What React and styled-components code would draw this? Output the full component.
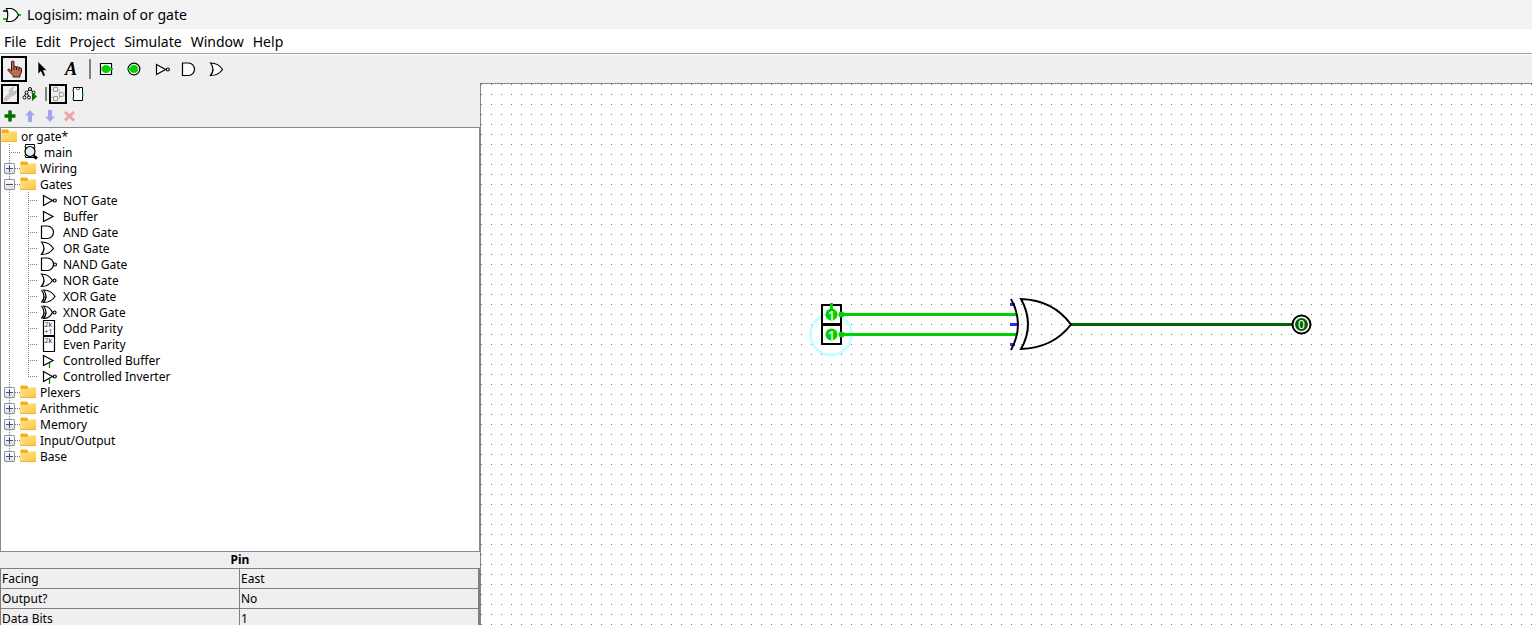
import React from "react";
import styled, { createGlobalStyle, css } from "styled-components";

const line = "#828790";
const face = "#efefef";
const lit = "#00d200";
const dim = "#006400";

const Global = createGlobalStyle`
  *, *::before, *::after { box-sizing: border-box; }
  body {
    margin: 0;
    background: ${face};
    color: #000;
    font-family: "Noto Sans", sans-serif;
    font-size: 12px;
    line-height: 16px;
  }
  button { font: inherit; color: inherit; background: none; border: 0; padding: 0; }
  svg { display: block; flex: none; }
`;

const Window = styled.div`
  display: flex;
  flex-direction: column;
  height: 100vh;
  overflow: hidden;
`;

const TitleBar = styled.header`
  display: flex;
  align-items: center;
  gap: 6px;
  flex: none;
  height: 29px;
  padding-left: 3px;
  background: #f3f3f3;
`;

const Title = styled.h1`
  margin: 0;
  font-size: 14px;
  font-weight: 400;
  line-height: 20px;
`;

const MenuBar = styled.nav`
  display: flex;
  align-items: center;
  gap: 9px;
  flex: none;
  height: 26px;
  padding-left: 4px;
  background: #fff;
  border-bottom: 1px solid #fff;
  box-shadow: inset 0 -1px #a0a0a0;
`;

const MenuItem = styled.button`
  font-size: 14px;
  line-height: 20px;
`;

const ToolBar = styled.div`
  display: flex;
  align-items: center;
  flex: none;
  height: ${(p) => (p.$small ? 22 : 28)}px;
`;

const ToolButton = styled.button`
  display: flex;
  align-items: center;
  justify-content: center;
  flex: none;
  width: ${(p) => (p.$small ? 20 : 28)}px;
  height: ${(p) => (p.$small ? 22 : 28)}px;
`;

const Chosen = styled.span`
  display: flex;
  align-items: center;
  justify-content: center;
  width: ${(p) => (p.$small ? 18 : 26)}px;
  height: ${(p) => (p.$small ? 20 : 26)}px;
  border: 2px solid #000;
`;

const TextGlyph = styled.span`
  padding-left: 2px;
  font: italic 700 18px/20px "Liberation Serif", serif;
`;

const Divider = styled.span`
  flex: none;
  width: 2px;
  height: ${(p) => (p.$small ? 14 : 20)}px;
  margin: 0 1px 0 5px;
  background: #808080;
`;

const Workspace = styled.div`
  display: flex;
  flex: 1;
  min-height: 0;
`;

const Explorer = styled.aside`
  display: flex;
  flex-direction: column;
  flex: none;
  width: 480px;
`;

const TreePanel = styled.div`
  flex: 1;
  min-height: 0;
  overflow: hidden;
  background: #fff;
  border: 1px solid ${line};
`;

const Branches = styled.ul`
  list-style: none;
  margin: 0;
  padding: 0;
`;

const Row = styled.div`
  display: flex;
  align-items: center;
  gap: 4px;
  height: 16px;
  white-space: nowrap;
`;

const Label = styled.span`
  padding-top: 2px;
`;

const Rails = styled.span`
  display: flex;
  height: 16px;
  margin-right: -4px;
`;

const dotsDown = "repeating-linear-gradient(to bottom, #808080 0 1px, transparent 1px 2px)";
const dotsAcross = "repeating-linear-gradient(to right, #808080 0 1px, transparent 1px 2px)";

const Rail = styled.span`
  display: flex;
  align-items: center;
  width: ${(p) => (p.$deep ? 20 : 19)}px;
  height: 16px;
  padding: 1px 0 0 3px;
  background-repeat: no-repeat;
  ${(p) =>
    p.$through
      ? css`
          background-image: ${dotsDown};
          background-position: 8px 0;
          background-size: 1px 16px;
        `
      : css`
          background-image: ${dotsDown}, ${dotsAcross};
          background-position: 8px 0, 8px 8px;
          background-size: 1px ${p.$last ? 9 : 16}px, ${p.$deep ? 10 : 11}px 1px;
        `}
`;

const Expander = styled.button`
  position: relative;
  width: 11px;
  height: 11px;
  border: 1px solid #919191;
  border-radius: 1px;
  background: linear-gradient(#fff, #e0e0e0);
  &::before, &::after {
    content: "";
    position: absolute;
    left: 1px;
    top: 4px;
    width: 7px;
    height: 1px;
    background: #3050a0;
  }
  &::after { display: ${(p) => (p.$open ? "none" : "block")}; transform: rotate(90deg); }
`;

const PropertiesBox = styled.div`
  flex: none;
  height: 73px;
  overflow: hidden;
`;

const Properties = styled.table`
  width: 100%;
  border-collapse: separate;
  border-spacing: 0;
  table-layout: fixed;
  border-right: 2px solid #808080;

  caption {
    height: 16px;
    font-weight: 700;
    text-align: center;
  }
  th, td {
    height: 20px;
    padding: 0 1px;
    font-weight: 400;
    text-align: left;
    border: 0 solid #808080;
    border-top-width: 1px;
    border-left-width: 1px;
  }
`;

const Canvas = styled.main`
  position: relative;
  flex: 1;
  min-width: 0;
  overflow: hidden;
  border: 0 solid ${line};
  border-top-width: 1px;
  border-left-width: 1px;
  background: #fff conic-gradient(from 270deg at 1px 1px, #777 90deg, transparent 0) 0 0 / 10px 10px;
`;

const Circuit = styled.svg`
  position: absolute;
  left: 320px;
  top: 206px;
`;

const Stroke = ({ w = 19, h = 16, children }) => (
  <svg width={w} height={h} viewBox={`0 0 ${w} ${h}`} fill="none" stroke="#000" strokeWidth="1.2" aria-hidden="true">
    {children}
  </svg>
);

const AND = "M1.5 2H7.5A6 6.250 0 0 1 7.5 14.5H1.5Z";
const OR = "M1.5 2Q9.5 2 13.5 8.5Q9.5 14.5 1.5 14.5Q6.5 8.5 1.5 2Z";
const NOR = "M1.5 2Q8.5 2 12.5 8.5Q8.5 14.5 1.5 14.5Q6.5 8.5 1.5 2Z";
const XOR = "M3.5 2Q11 2 15 8.5Q11 14.5 3.5 14.5Q8.5 8.5 3.5 2ZM1.5 2Q6.5 8.5 1.5 14.5";
const XNOR = "M3.5 2Q9.5 2 12.5 8.5Q9.5 14.5 3.5 14.5Q8.5 8.5 3.5 2ZM1.5 2Q6.5 8.5 1.5 14.5";

const Bubble = ({ x = 14.5 }) => <circle cx={x} cy="8.5" r="1.5" />;

const Small = ({ y, children }) => (
  <text x="4.5" y={y} fontSize="7" fill="#333" stroke="none">{children}</text>
);

const glyphs = {
  not: <><path d="M3.5 3.5L12.5 8.5L3.5 13.5Z" /><Bubble x={14.8} /></>,
  buffer: <path d="M3.5 3.5L13 8.5L3.5 13.5Z" />,
  and: <path d={AND} />,
  or: <path d={OR} />,
  nand: <><path d={AND} /><Bubble x={15} /></>,
  nor: <><path d={NOR} /><Bubble /></>,
  xor: <path d={XOR} />,
  xnor: <><path d={XNOR} /><Bubble /></>,
  odd: <><path d="M3.5 0.5H14.5V15.5H3.5Z" /><Small y="7">2k</Small><Small y="14">+1</Small></>,
  even: <><path d="M3.5 0.5H14.5V15.5H3.5Z" /><Small y="7">2k</Small></>,
  cbuffer: <><path d="M9.5 11V16" stroke="#008000" /><path d="M3.5 3.5L13 8.5L3.5 13.5Z" /></>,
  cinverter: <><path d="M9.5 11V16" stroke="#008000" /><path d="M3.5 3.5L12.5 8.5L3.5 13.5Z" /><Bubble x={14.8} /></>,
};

const Folder = () => (
  <svg width="16" height="16" viewBox="0 0 16 16" aria-hidden="true">
    <defs>
      <linearGradient id="folder" x1="0" y1="0" x2="1" y2="1">
        <stop offset="0" stopColor="#ffe296" />
        <stop offset="1" stopColor="#ffc83a" />
      </linearGradient>
    </defs>
    <path d="M0.5 2.5Q0.5 1.5 1.5 1.5H7L8.5 4H15.5V6H0.5Z" fill="#f5ad10" />
    <path d="M0 5H7L8.5 3.5H16V13.5Q16 14 15 14H1Q0 14 0 13Z" fill="url(#folder)" />
    <path d="M0.5 13.5H15.5" stroke="#eeb32c" />
  </svg>
);

const MainCircuit = () => (
  <svg width="20" height="16" viewBox="0 0 20 16" aria-hidden="true">
    <path d="M5.5 0.5H14.5V13.5H5.5Z" fill="#fff" stroke="#000" />
    <path d="M4 2.5H6M4 11.5H6M14 3.5H16" stroke={lit} />
    <path d="M13.5 12L17 14.5" stroke="#000" strokeWidth="3" />
    <circle cx="10" cy="7.5" r="5" fill="#e8eefc" stroke="#000" strokeWidth="1.2" />
  </svg>
);

const AppIcon = () => (
  <svg width="18" height="16" viewBox="0 0 18 16" aria-hidden="true">
    <path d="M0 4H5" stroke={dim} strokeWidth="2" />
    <path d="M0 12H5M15 8H18" stroke={lit} strokeWidth="2" />
    <path d="M3.5 1.5H8Q13 2.5 15.5 8Q13 13.5 8 14.5H3.5Q6 8 3.5 1.5Z" fill="#fff" stroke="#000" strokeWidth="1.2" />
  </svg>
);

const Hand = () => (
  <svg width="20" height="20" viewBox="0 0 20 20" aria-hidden="true">
    <path
      d="M7.5 12V3Q7.5 2 8.8 2Q10 2 10 3V8Q11 7 12.5 7.8Q14 7.3 15 8.5Q16.5 8 17.5 9.5V13L16 16V18H9V16.5L4 11.5Q3.5 9.5 5.5 10.2Z"
      fill="#bd6c54"
      stroke="#3b1a10"
    />
    <path d="M10 8V11M12.5 8V11M15 9V11.5" stroke="#3b1a10" fill="none" />
  </svg>
);

const Cursor = () => (
  <svg width="12" height="18" viewBox="0 0 12 18" aria-hidden="true">
    <path d="M2 1.5V14L5 11.5L7 16.5L9.5 15.5L7.4 10.5H11Z" fill="#000" stroke="#fff" strokeWidth="0.6" />
  </svg>
);

const PinIn = () => (
  <Stroke w={16} h={16}>
    <path d="M2.5 2.5H13.5V13.5H2.5Z" fill="#fff" />
    <ellipse cx="8" cy="8" rx="4.5" ry="4" fill={lit} stroke="none" />
    <path d="M11 8H15" stroke={lit} strokeWidth="2" />
  </Stroke>
);

const PinOut = () => (
  <Stroke w={16} h={16}>
    <circle cx="8" cy="8" r="5.8" fill="#fff" />
    <circle cx="8" cy="8" r="4" fill={lit} stroke="none" />
    <path d="M1 8H5" stroke={lit} strokeWidth="2" />
  </Stroke>
);

const Wrench = () => (
  <svg width="14" height="16" viewBox="0 0 14 16" aria-hidden="true">
    <path
      d="M1 12.5L6.5 7.5Q5.5 3 9.5 1.5L11 1.5L9 4L10.5 6L13.5 4.5Q13.5 9 9 9.5L3.5 14.5Q1.5 15.5 1 12.5Z"
      fill="#c4c4c4"
      stroke="#aaa"
      strokeWidth="0.6"
    />
  </svg>
);

const Simulation = () => (
  <svg width="16" height="16" viewBox="0 0 16 16" fill="none" stroke="#000" aria-hidden="true">
    <path d="M8 3L4 7L2 11M8 3L11.5 6.5M5 7L7 11" />
    <circle cx="8" cy="3" r="1.5" fill="#fff" />
    <circle cx="4.5" cy="6.5" r="1.5" fill="#fff" />
    <circle cx="11.5" cy="6.5" r="1.5" fill="#fff" />
    <circle cx="2.5" cy="11.5" r="1.5" fill="#fff" />
    <circle cx="7" cy="11.5" r="1.5" fill="#fff" />
    <path d="M10 6L15 10.5L10 15Z" fill="#007000" stroke="none" />
  </svg>
);

const LayoutView = () => (
  <svg width="14" height="16" viewBox="0 0 14 16" fill="none" stroke="#999" aria-hidden="true">
    <path d="M0 3.5H2M0 11.5H2M6 3.5H8.5V6M6 12.5H8.5V10" stroke="#a8d8a8" />
    <path d="M2.5 1.5H6.5V5.5H2.5ZM2.5 10.5H6.5V14.5H2.5Z" />
    <path d="M8.5 6.5H11A2 2 0 0 1 11 10.5H8.5Z" />
  </svg>
);

const ShapeView = () => (
  <svg width="14" height="16" viewBox="0 0 14 16" fill="none" aria-hidden="true">
    <path d="M2.5 1.5H11.5V14.5H2.5Z" fill="#fff" stroke="#000" />
    <path d="M5.5 2V3.5H8.5V2" stroke="#777" />
    <path d="M1 4.5H3M1 12.5H3M11 8.5H13" stroke={lit} strokeWidth="1.5" />
  </svg>
);

const Plus = () => (
  <svg width="12" height="12" viewBox="0 0 12 12" aria-hidden="true">
    <path d="M6 0.5V11.5M0.5 6H11.5" stroke="#007000" strokeWidth="3.5" />
  </svg>
);

const Arrow = ({ down }) => (
  <svg width="12" height="12" viewBox="0 0 12 12" aria-hidden="true">
    <path d={down ? "M6 12L1 6.5H4V0H8V6.5H11Z" : "M6 0L1 5.5H4V12H8V5.5H11Z"} fill="#a5a5ec" />
  </svg>
);

const Cross = () => (
  <svg width="12" height="12" viewBox="0 0 12 12" aria-hidden="true">
    <path d="M1 2L10 10.5M10 2L1 10.5" stroke="#eca5a5" strokeWidth="3" />
  </svg>
);

const menus = ["File", "Edit", "Project", "Simulate", "Window", "Help"];

const gates = [
  ["NOT Gate", "not"],
  ["Buffer", "buffer"],
  ["AND Gate", "and"],
  ["OR Gate", "or"],
  ["NAND Gate", "nand"],
  ["NOR Gate", "nor"],
  ["XOR Gate", "xor"],
  ["XNOR Gate", "xnor"],
  ["Odd Parity", "odd"],
  ["Even Parity", "even"],
  ["Controlled Buffer", "cbuffer"],
  ["Controlled Inverter", "cinverter"],
];

const libraries = [
  { name: "Wiring" },
  { name: "Gates", tools: gates },
  { name: "Plexers" },
  { name: "Arithmetic" },
  { name: "Memory" },
  { name: "Input/Output" },
  { name: "Base" },
];

const attributes = [
  ["Facing", "East"],
  ["Output?", "No"],
  ["Data Bits", "1"],
];

const Library = ({ name, tools, last }) => (
  <li>
    <Row>
      <Rails>
        <Rail $last={last}>
          <Expander $open={!!tools} aria-label={`${tools ? "Collapse" : "Expand"} ${name}`} />
        </Rail>
      </Rails>
      <Folder />
      <Label>{name}</Label>
    </Row>
    {tools && (
      <Branches>
        {tools.map(([label, glyph], i) => (
          <li key={label}>
            <Row>
              <Rails>
                <Rail $through />
                <Rail $deep $last={i === tools.length - 1} />
              </Rails>
              <Stroke>{glyphs[glyph]}</Stroke>
              <Label>{label}</Label>
            </Row>
          </li>
        ))}
      </Branches>
    )}
  </li>
);

const InputPin = ({ y }) => (
  <g>
    <rect x="21" y={y - 9.5} width="19" height="19" fill="none" stroke="#000" strokeWidth="2" />
    <circle cx="30.5" cy={y} r="6" fill={lit} />
    <text x="30.5" y={y + 5} textAnchor="middle" fontSize="12" fontWeight="600" fill="#fff">1</text>
    <circle cx="40.5" cy={y} r="3" fill={lit} />
  </g>
);

export default function App() {
  return (
    <Window>
      <Global />
      <TitleBar>
        <AppIcon />
        <Title>Logisim: main of or gate</Title>
      </TitleBar>
      <MenuBar>
        {menus.map((m) => (
          <MenuItem key={m}>{m}</MenuItem>
        ))}
      </MenuBar>
      <ToolBar>
        <ToolButton aria-label="Poke"><Chosen><Hand /></Chosen></ToolButton>
        <ToolButton aria-label="Select"><Cursor /></ToolButton>
        <ToolButton aria-label="Text"><TextGlyph>A</TextGlyph></ToolButton>
        <Divider />
        <ToolButton aria-label="Input pin"><PinIn /></ToolButton>
        <ToolButton aria-label="Output pin"><PinOut /></ToolButton>
        <ToolButton aria-label="NOT Gate"><Stroke><g fill="#fff">{glyphs.not}</g></Stroke></ToolButton>
        <ToolButton aria-label="AND Gate"><Stroke w={18}><g fill="#fff">{glyphs.and}</g></Stroke></ToolButton>
        <ToolButton aria-label="OR Gate"><Stroke w={18}><g fill="#fff">{glyphs.or}</g></Stroke></ToolButton>
      </ToolBar>
      <Workspace>
        <Explorer>
          <ToolBar $small>
            <ToolButton $small aria-label="Show tools"><Chosen $small><Wrench /></Chosen></ToolButton>
            <ToolButton $small aria-label="Show simulation"><Simulation /></ToolButton>
            <Divider $small />
            <ToolButton $small aria-label="Edit layout"><Chosen $small><LayoutView /></Chosen></ToolButton>
            <ToolButton $small aria-label="Edit appearance"><ShapeView /></ToolButton>
          </ToolBar>
          <ToolBar $small>
            <ToolButton $small aria-label="Add circuit"><Plus /></ToolButton>
            <ToolButton $small aria-label="Move up"><Arrow /></ToolButton>
            <ToolButton $small aria-label="Move down"><Arrow down /></ToolButton>
            <ToolButton $small aria-label="Remove circuit"><Cross /></ToolButton>
          </ToolBar>
          <TreePanel>
            <Row><Folder /><Label>or gate*</Label></Row>
            <Branches>
              <li>
                <Row>
                  <Rails><Rail /></Rails>
                  <MainCircuit />
                  <Label>main</Label>
                </Row>
              </li>
              {libraries.map((lib, i) => (
                <Library key={lib.name} {...lib} last={i === libraries.length - 1} />
              ))}
            </Branches>
          </TreePanel>
          <PropertiesBox>
            <Properties>
              <caption>Pin</caption>
              <tbody>
                {attributes.map(([k, v]) => (
                  <tr key={k}>
                    <th scope="row">{k}</th>
                    <td>{v}</td>
                  </tr>
                ))}
              </tbody>
            </Properties>
          </PropertiesBox>
        </Explorer>
        <Canvas>
          <Circuit width="520" height="70" viewBox="0 0 520 70" role="img" aria-label="XOR circuit">
            <circle cx="30" cy="44.5" r="20.5" fill="none" stroke="#c0ffff" strokeWidth="2.5" />
            <path d="M40 24.5H216M40 44.5H216" stroke={lit} strokeWidth="3" />
            <path d="M270 34.5H491" stroke={dim} strokeWidth="3" />
            <path d="M209 14.5H214M209 34.5H217M209 54.5H214" stroke="#2a2aff" strokeWidth="3" />
            <InputPin y={24.5} />
            <InputPin y={44.5} />
            <path d="M30.5 13V19" stroke={lit} strokeWidth="3" />
            <g fill="none" stroke="#000" strokeWidth="2">
              <path d="M210 9Q224 34.5 210 60" />
              <path d="M220 9Q234 34.5 220 59Q252 58 270 34.5Q252 10 220 9Z" />
            </g>
            <circle cx="500.5" cy="34.5" r="9" fill="#fff" stroke="#000" strokeWidth="2" />
            <circle cx="500.5" cy="34.5" r="6.5" fill={dim} />
            <text x="500.5" y="39" textAnchor="middle" fontSize="12" fill="#fff">0</text>
          </Circuit>
        </Canvas>
      </Workspace>
    </Window>
  );
}
